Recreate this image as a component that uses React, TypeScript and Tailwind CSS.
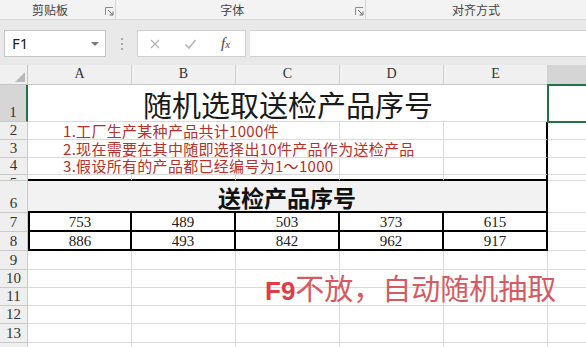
import React from "react";

const CJK = { fontFamily: "'Noto Sans CJK SC', 'Noto Sans', sans-serif" };
const SERIF = { fontFamily: "'Liberation Serif', 'Noto Sans CJK SC', serif" };

function Launcher() {
  return (
    <svg width="9" height="9" viewBox="0 0 9 9" className="shrink-0">
      <path d="M0.5 8 V0.5 H8" stroke="#8a8a8a" strokeWidth="1" fill="none" />
      <path d="M3 3 L7.5 7.5" stroke="#6a6a6a" strokeWidth="1" fill="none" />
      <path d="M8 4.5 V8 H4.5" stroke="#6a6a6a" strokeWidth="1" fill="none" />
    </svg>
  );
}

function RowHead({ n, h, active, top }: { n: string; h: string; active?: boolean; top?: boolean }) {
  return (
    <div
      className={
        "w-[28px] shrink-0 border-b border-[#c9c9c9] flex justify-center overflow-hidden text-[15px] leading-none text-[#333] " +
        (top ? "items-start pt-[1px] " : "items-end pb-[1px] ") +
        (active ? "bg-[#d6d6d6] border-r-2 border-r-[#217346] " : "bg-[#efefef] border-r border-r-[#c9c9c9] ") +
        h
      }
      style={SERIF}
    >
      {n}
    </div>
  );
}

function Cell({ extra = "" }: { extra?: string }) {
  return <div className={"w-[104px] shrink-0 h-full border-r border-b border-[#dadada] " + extra} />;
}

function TextRow({ n, h, text }: { n: string; h: string; text: string }) {
  return (
    <div className={"flex " + h}>
      <RowHead n={n} h="h-full" />
      <div className="relative z-10 w-[104px] shrink-0 h-full border-r border-b border-[#dadada] flex items-end overflow-visible">
        <span
          className="ml-[35px] whitespace-nowrap bg-white text-[15px] leading-[16px] h-[16px] tracking-[0.3px] text-[#b83029]"
          style={CJK}
        >
          {text}
        </span>
      </div>
      <Cell />
      <Cell />
      <Cell />
      <Cell extra="border-r-2 border-r-black" />
      <Cell />
    </div>
  );
}

function NumRow({ n, vals }: { n: string; vals: number[] }) {
  return (
    <div className="flex h-[19px]">
      <RowHead n={n} h="h-full" />
      {vals.map((v, i) => (
        <div
          key={i}
          className={
            "w-[104px] shrink-0 h-full border-r-2 border-b-2 border-black flex items-end justify-center text-[15px] leading-[16px] text-[#222] " +
            (i === 0 ? "border-l-2" : "")
          }
          style={SERIF}
        >
          {v}
        </div>
      ))}
      <Cell />
    </div>
  );
}

function EmptyRow({ n, h }: { n: string; h: string }) {
  return (
    <div className={"flex " + h}>
      <RowHead n={n} h="h-full" />
      <Cell />
      <Cell />
      <Cell />
      <Cell />
      <Cell />
      <Cell />
    </div>
  );
}

export default function App() {
  return (
    <div className="relative w-[586px] h-[347px] overflow-hidden bg-white">
      {/* Ribbon group labels */}
      <div className="flex h-[20px] bg-[#f3f3f3] border-b border-[#d8d8d8] text-[12px] leading-none text-[#444]" style={CJK}>
        <div className="flex w-[117px] items-center border-r border-[#d6d6d6]">
          <div className="w-[100px] text-center">剪贴板</div>
          <div className="ml-[5px] mt-[4px]"><Launcher /></div>
        </div>
        <div className="flex w-[251px] items-center border-r border-[#d6d6d6]">
          <div className="w-[232px] text-center">字体</div>
          <div className="ml-[7px] mt-[4px]"><Launcher /></div>
        </div>
        <div className="flex flex-1 items-center">
          <div className="w-[220px] text-center">对齐方式</div>
        </div>
      </div>

      {/* Formula bar */}
      <div className="flex h-[45px] bg-[#e9e9e9] pt-[10px] items-start">
        <div className="ml-[4px] w-[102px] h-[27px] bg-white border border-[#c6c6c6] flex items-center">
          <span className="ml-[7px] text-[15px] text-[#222]" style={{ fontFamily: "'Noto Sans', sans-serif" }}>F1</span>
          <div className="ml-auto mr-[6px] w-0 h-0 border-x-[4px] border-x-transparent border-t-[4px] border-t-[#7a7a7a]" />
        </div>
        <div className="w-[31px] h-[27px] flex flex-col items-center justify-center gap-[3px]">
          <div className="w-[2px] h-[2px] bg-[#a8a8a8]" />
          <div className="w-[2px] h-[2px] bg-[#a8a8a8]" />
          <div className="w-[2px] h-[2px] bg-[#a8a8a8]" />
        </div>
        <div className="w-[109px] h-[27px] bg-white border border-[#d0d0d0] flex items-center">
          <svg width="12" height="12" viewBox="0 0 12 12" className="ml-[11px]">
            <path d="M2 2 L10 10 M10 2 L2 10" stroke="#b5b5b5" strokeWidth="1.4" />
          </svg>
          <svg width="13" height="12" viewBox="0 0 13 12" className="ml-[23px]">
            <path d="M1.5 6.5 L5 10 L11.5 2" stroke="#b5b5b5" strokeWidth="1.6" fill="none" />
          </svg>
          <span className="ml-[24px] text-[15px] italic text-[#444] leading-none" style={SERIF}>
            f<span className="text-[11px]">x</span>
          </span>
        </div>
        <div className="ml-[4px] flex-1 h-[27px] bg-white border-y border-[#d0d0d0]" />
      </div>

      {/* Column headers */}
      <div className="flex h-[20px] bg-[#f0f0f0] border-b border-[#c6c6c6] text-[14px] leading-none text-[#333]" style={SERIF}>
        <div className="w-[28px] shrink-0 h-full border-r border-[#c6c6c6] relative">
          <svg width="28" height="20" viewBox="0 0 28 20" className="absolute left-0 top-0">
            <polygon points="25,7 25,17 15,17" fill="#b9b9b9" />
          </svg>
        </div>
        {["A", "B", "C", "D", "E"].map((c) => (
          <div key={c} className="w-[104px] shrink-0 h-full border-r border-[#d0d0d0] flex items-end justify-center pb-[3px]">
            {c}
          </div>
        ))}
        <div className="w-[104px] shrink-0 h-full bg-[#d5d5d5] flex items-end justify-center pb-[3px]">F</div>
      </div>

      {/* Row 1 */}
      <div className="flex h-[37px]">
        <RowHead n="1" h="h-full" active />
        <div className="w-[520px] shrink-0 h-full border-b border-[#dadada] flex items-center justify-center pt-[3px]">
          <span className="text-[29px] leading-none text-[#1a1a1a]" style={CJK}>随机选取送检产品序号</span>
        </div>
        <div className="relative z-20 -top-px -ml-px w-[105px] h-[39px] shrink-0 border-2 border-[#217346]" />
      </div>

      <TextRow n="2" h="h-[18px]" text="1.工厂生产某种产品共计1000件" />
      <TextRow n="3" h="h-[18px]" text="2.现在需要在其中随即选择出10件产品作为送检产品" />
      <TextRow n="4" h="h-[17px]" text="3.假设所有的产品都已经编号为1～1000" />

      {/* Row 5 (very short) */}
      <div className="flex h-[6px]">
        <RowHead n="5" h="h-full" top />
        <Cell extra="border-b-2 border-b-black" />
        <Cell extra="border-b-2 border-b-black" />
        <Cell extra="border-b-2 border-b-black" />
        <Cell extra="border-b-2 border-b-black" />
        <Cell extra="border-b-2 border-b-black border-r-2 border-r-black" />
        <Cell />
      </div>

      {/* Row 6 */}
      <div className="flex h-[32px]">
        <RowHead n="6" h="h-full" />
        <div className="w-[520px] shrink-0 h-full bg-[#f2f2f2] border-r-2 border-b-2 border-black flex items-center justify-center pt-[3px]">
          <span className="text-[23px] font-bold leading-none text-[#111]" style={CJK}>送检产品序号</span>
        </div>
        <Cell />
      </div>

      <NumRow n="7" vals={[753, 489, 503, 373, 615]} />
      <NumRow n="8" vals={[886, 493, 842, 962, 917]} />

      <EmptyRow n="9" h="h-[19px]" />
      <EmptyRow n="10" h="h-[18px]" />
      <EmptyRow n="11" h="h-[18px]" />
      <EmptyRow n="12" h="h-[18px]" />
      <EmptyRow n="13" h="h-[19px]" />
      <EmptyRow n="14" h="h-[19px]" />

      {/* Annotation overlay */}
      <div className="absolute left-[265px] top-[273px] flex items-baseline whitespace-nowrap leading-none" style={CJK}>
        <span className="text-[26px] font-bold text-[#e13b48]" style={{ fontFamily: "'Liberation Sans', 'Noto Sans', sans-serif" }}>F9</span>
        <span className="text-[29px] text-[#d65a62]">不放，自动随机抽取</span>
      </div>
    </div>
  );
}
